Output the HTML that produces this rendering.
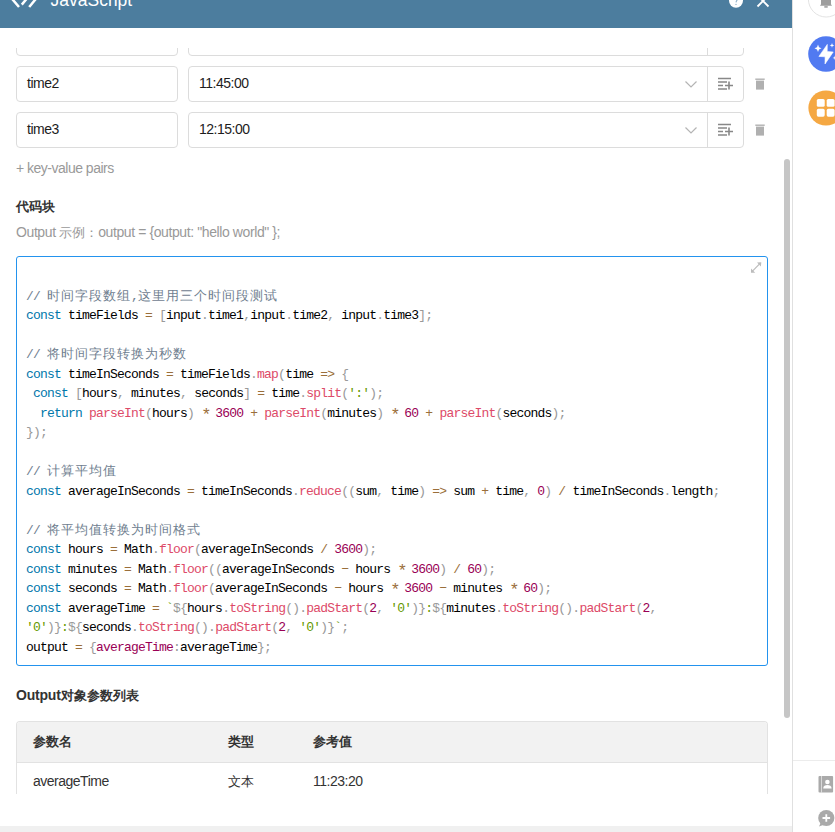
<!DOCTYPE html>
<html><head><meta charset="utf-8">
<style>
*{margin:0;padding:0;box-sizing:border-box}
html,body{width:835px;height:832px;overflow:hidden;background:#fff;font-family:"Liberation Sans",sans-serif;font-size:14px;letter-spacing:-0.5px;color:#333}
.abs{position:absolute}
.b{font-weight:bold;letter-spacing:-0.2px}
.cj{font-size:13px;letter-spacing:0}
#hdr{position:absolute;left:0;top:0;width:792px;height:28px;background:#4c7d9e}
#vline{position:absolute;left:792px;top:0;width:1px;height:832px;background:#e0e0e0}
#side{position:absolute;left:793px;top:0;width:42px;height:832px;background:#fff}
.inp{position:absolute;border:1px solid #dcdcdc;border-radius:4px;background:#fff;height:36px}
.inp span{position:absolute;left:10px;top:8px;color:#1c1c1c;font-size:14px}
.btnbox{position:absolute;border:1px solid #dcdcdc;border-left:1px solid #dcdcdc;border-radius:0 4px 4px 0;height:36px}
#code{position:absolute;left:16px;top:256px;width:752px;height:410px;border:1px solid #2393ee;border-radius:3px}
pre{position:absolute;left:9px;top:10px;font-family:"Liberation Mono",monospace;font-size:13px;letter-spacing:-0.8px;line-height:19.5px;color:#000}
pre .z{font-size:12.5px;letter-spacing:1px;line-height:0}
.as{font-size:17px;letter-spacing:-3.2px;position:relative;top:3px;line-height:0}
.k{color:#07a}.f{color:#dd4a68}.p{color:#999}.o{color:#9a6e3a}.n{color:#905}.s{color:#690}.c{color:#708090}
.tbl{position:absolute;left:16px;top:721px;width:752px;height:73px;border:1px solid #e2e2e2;border-bottom:none;border-radius:4px 4px 0 0;overflow:hidden}
.th{position:absolute;left:0;top:0;width:750px;height:41px;background:#f2f2f2;border-bottom:1px solid #e2e2e2}
</style></head><body>
<div id="scroll" style="position:absolute;left:0;top:48px;width:792px;height:746px;overflow:hidden"><div style="position:absolute;left:0;top:-48px;width:792px;height:832px">
<!-- row 0 (cut) -->
<div class="inp" style="left:16px;top:20px;width:162px"></div>
<div class="inp" style="left:188px;top:20px;width:556px"></div>
<div class="abs" style="left:707px;top:20px;width:1px;height:36px;background:#dcdcdc"></div>
<svg class="abs" style="left:685px;top:35px" width="12" height="7" viewBox="0 0 12 7"><path d="M0.5 0.5 L6 6 L11.5 0.5" stroke="#b4b4b4" stroke-width="1.2" fill="none"/></svg>
<svg class="abs" style="left:717px;top:31px" width="17" height="14" viewBox="0 0 17 14"><path d="M1 1.5H14 M1 5H10 M1 8.5H6 M1 12H10 M12 4.5V12.5 M8 8.5H16" stroke="#888" stroke-width="1.6" fill="none"/></svg>
<svg class="abs" style="left:755px;top:32px" width="10" height="12" viewBox="0 0 10 12"><path d="M0.3 1.2H9.7" stroke="#b0b0b0" stroke-width="1.4"/><rect x="1" y="2.6" width="8" height="9" fill="#b0b0b0"/></svg>

<!-- row 1 -->
<div class="inp" style="left:16px;top:66px;width:162px"><span>time2</span></div>
<div class="inp" style="left:188px;top:66px;width:556px"><span>11:45:00</span></div>
<div class="abs" style="left:707px;top:66px;width:1px;height:36px;background:#dcdcdc"></div>
<svg class="abs" style="left:685px;top:81px" width="12" height="7" viewBox="0 0 12 7"><path d="M0.5 0.5 L6 6 L11.5 0.5" stroke="#b4b4b4" stroke-width="1.2" fill="none"/></svg>
<svg class="abs" style="left:717px;top:77px" width="17" height="14" viewBox="0 0 17 14"><path d="M1 1.5H14 M1 5H10 M1 8.5H6 M1 12H10 M12 4.5V12.5 M8 8.5H16" stroke="#888" stroke-width="1.6" fill="none"/></svg>
<svg class="abs" style="left:755px;top:78px" width="10" height="12" viewBox="0 0 10 12"><path d="M0.3 1.2H9.7" stroke="#b0b0b0" stroke-width="1.4"/><rect x="1" y="2.6" width="8" height="9" fill="#b0b0b0"/></svg>
<!-- row 2 -->
<div class="inp" style="left:16px;top:112px;width:162px"><span>time3</span></div>
<div class="inp" style="left:188px;top:112px;width:556px"><span>12:15:00</span></div>
<div class="abs" style="left:707px;top:112px;width:1px;height:36px;background:#dcdcdc"></div>
<svg class="abs" style="left:685px;top:127px" width="12" height="7" viewBox="0 0 12 7"><path d="M0.5 0.5 L6 6 L11.5 0.5" stroke="#b4b4b4" stroke-width="1.2" fill="none"/></svg>
<svg class="abs" style="left:717px;top:123px" width="17" height="14" viewBox="0 0 17 14"><path d="M1 1.5H14 M1 5H10 M1 8.5H6 M1 12H10 M12 4.5V12.5 M8 8.5H16" stroke="#888" stroke-width="1.6" fill="none"/></svg>
<svg class="abs" style="left:755px;top:124px" width="10" height="12" viewBox="0 0 10 12"><path d="M0.3 1.2H9.7" stroke="#b0b0b0" stroke-width="1.4"/><rect x="1" y="2.6" width="8" height="9" fill="#b0b0b0"/></svg>

<div class="abs" style="left:16px;top:160px;color:#999">+ key-value pairs</div>
<div class="abs b cj" style="left:16px;top:198px;color:#333">代码块</div>
<div class="abs" style="left:16px;top:224px;color:#999;letter-spacing:-0.4px">Output <span class="cj">示例：</span>output = {output: "hello world" };</div>

<div id="code">
<pre>

<span class="c">// <span class="z">时间字段数组</span>,<span class="z">这里用三个时间段测试</span></span>
<span class="k">const</span> timeFields <span class="o">=</span> <span class="p">[</span>input<span class="p">.</span>time1<span class="p">,</span>input<span class="p">.</span>time2<span class="p">,</span> input<span class="p">.</span>time3<span class="p">];</span>

<span class="c">// <span class="z">将时间字段转换为秒数</span></span>
<span class="k">const</span> timeInSeconds <span class="o">=</span> timeFields<span class="p">.</span><span class="f">map</span><span class="p">(</span>time <span class="o">=&gt;</span> <span class="p">{</span>
 <span class="k">const</span> <span class="p">[</span>hours<span class="p">,</span> minutes<span class="p">,</span> seconds<span class="p">]</span> <span class="o">=</span> time<span class="p">.</span><span class="f">split</span><span class="p">(</span><span class="s">':'</span><span class="p">);</span>
  <span class="k">return</span> <span class="f">parseInt</span><span class="p">(</span>hours<span class="p">)</span> <span class="o as">*</span> <span class="n">3600</span> <span class="o">+</span> <span class="f">parseInt</span><span class="p">(</span>minutes<span class="p">)</span> <span class="o as">*</span> <span class="n">60</span> <span class="o">+</span> <span class="f">parseInt</span><span class="p">(</span>seconds<span class="p">);</span>
<span class="p">});</span>

<span class="c">// <span class="z">计算平均值</span></span>
<span class="k">const</span> averageInSeconds <span class="o">=</span> timeInSeconds<span class="p">.</span><span class="f">reduce</span><span class="p">((</span>sum<span class="p">,</span> time<span class="p">)</span> <span class="o">=&gt;</span> sum <span class="o">+</span> time<span class="p">,</span> <span class="n">0</span><span class="p">)</span> <span class="o">/</span> timeInSeconds<span class="p">.</span>length<span class="p">;</span>

<span class="c">// <span class="z">将平均值转换为时间格式</span></span>
<span class="k">const</span> hours <span class="o">=</span> Math<span class="p">.</span><span class="f">floor</span><span class="p">(</span>averageInSeconds <span class="o">/</span> <span class="n">3600</span><span class="p">);</span>
<span class="k">const</span> minutes <span class="o">=</span> Math<span class="p">.</span><span class="f">floor</span><span class="p">((</span>averageInSeconds <span class="o">&#8722;</span> hours <span class="o as">*</span> <span class="n">3600</span><span class="p">)</span> <span class="o">/</span> <span class="n">60</span><span class="p">);</span>
<span class="k">const</span> seconds <span class="o">=</span> Math<span class="p">.</span><span class="f">floor</span><span class="p">(</span>averageInSeconds <span class="o">&#8722;</span> hours <span class="o as">*</span> <span class="n">3600</span> <span class="o">&#8722;</span> minutes <span class="o as">*</span> <span class="n">60</span><span class="p">);</span>
<span class="k">const</span> averageTime <span class="o">=</span> <span class="s">`</span><span class="p">${</span>hours<span class="p">.</span><span class="f">toString</span><span class="p">().</span><span class="f">padStart</span><span class="p">(</span><span class="n">2</span><span class="p">,</span> <span class="s">'0'</span><span class="p">)}</span><span class="s">:</span><span class="p">${</span>minutes<span class="p">.</span><span class="f">toString</span><span class="p">().</span><span class="f">padStart</span><span class="p">(</span><span class="n">2</span><span class="p">,</span>
<span class="s">'0'</span><span class="p">)}</span><span class="s">:</span><span class="p">${</span>seconds<span class="p">.</span><span class="f">toString</span><span class="p">().</span><span class="f">padStart</span><span class="p">(</span><span class="n">2</span><span class="p">,</span> <span class="s">'0'</span><span class="p">)}</span><span class="s">`</span><span class="p">;</span>
output <span class="o">=</span> <span class="p">{</span><span class="n">averageTime</span><span class="p">:</span>averageTime<span class="p">};</span></pre>
<svg class="abs" style="left:733px;top:4px" width="13" height="13" viewBox="0 0 13 13"><path d="M7 1.6 L11.3 1.2 L10.9 5.4 Z M1 7.4 L1 11.7 L5.2 11.7 Z" fill="#bcbcbc"/><path d="M10.3 2.2 L2 10.6" stroke="#bcbcbc" stroke-width="1.2"/></svg>
</div>

<div class="abs b" style="left:16px;top:687px;color:#333">Output<span class="cj">对象参数列表</span></div>
<div class="tbl">
  <div class="th"></div>
  <div class="abs" style="left:16px;top:11px;color:#333"><span class="b cj">参数名</span></div>
  <div class="abs" style="left:211px;top:11px;color:#333"><span class="b cj">类型</span></div>
  <div class="abs" style="left:296px;top:11px;color:#333"><span class="b cj">参考值</span></div>
  <div class="abs" style="left:16px;top:51px;color:#333">averageTime</div>
  <div class="abs" style="left:211px;top:51px;color:#333"><span class="cj">文本</span></div>
  <div class="abs" style="left:296px;top:51px;color:#333">11:23:20</div>
</div>

</div></div>
<div id="hdr">
  <svg class="abs" style="left:0;top:-10px" width="40" height="20" viewBox="0 0 40 20"><path d="M19 2 L12.6 9.5 L19 17 M29.2 2 L35.4 9.5 L29.2 17 M21.8 14.6 L29 6" stroke="#fff" stroke-width="2.5" fill="none"/></svg>
  <div class="abs" style="left:50.5px;top:-10.5px;color:#fff;font-size:17.5px;letter-spacing:0">JavaScript</div>
  <svg class="abs" style="left:728px;top:-7px" width="16" height="16" viewBox="0 0 16 16"><circle cx="8" cy="7.8" r="7" fill="#fff"/><path d="M6.3 5.2 C6.5 3.6 9.7 3.6 9.7 5.4 C9.7 6.8 8.3 7.4 8 9.3" stroke="#8fb0c8" stroke-width="1.1" fill="none"/><circle cx="8" cy="11.4" r="0.7" fill="#8fb0c8"/></svg>
  <svg class="abs" style="left:756px;top:-6px" width="14" height="14" viewBox="0 0 14 14"><path d="M1.5 1.5 L12.5 12.5 M12.5 1.5 L1.5 12.5" stroke="#fff" stroke-width="1.8" fill="none"/></svg>
</div>

<div class="abs" style="left:784px;top:159px;width:6px;height:559px;border-radius:3px;background:#c6c6c6"></div>
<div class="abs" style="left:0;top:826px;width:792px;height:6px;background:#f0f0f0"></div>

<div id="vline"></div>
<div id="side">
  <svg class="abs" style="left:-3px;top:-25px" width="45" height="45" viewBox="0 0 45 45"><circle cx="36.2" cy="24.2" r="17.8" fill="#fff" stroke="#e3e3e3" stroke-width="1"/><path d="M31 20 L31 29.2 L30 30.8 H42 L41 29.2 L41 20 Z" fill="#9e9e9e"/><rect x="34.3" y="30.8" width="3.4" height="2" fill="#aaa"/></svg>
  <svg class="abs" style="left:0px;top:30px" width="42" height="48" viewBox="0 0 42 48"><circle cx="33" cy="24" r="17.8" fill="#517af1"/><path d="M34.3 14.4 L34.2 21.6 L40.2 22 L32 34 L32.1 26.8 L25.9 26.4 Z" fill="#fff" stroke="#fff" stroke-width="0.6" stroke-linejoin="round"/><path d="M25 14.5 L26 17.2 L28.5 18.3 L26 19.4 L25 22 L24 19.4 L21.5 18.3 L24 17.2 Z" fill="#fff"/><path d="M39 13 L39.6 14.8 L41.4 15.4 L39.6 16 L39 17.8 L38.4 16 L36.6 15.4 L38.4 14.8 Z" fill="#fff"/><path d="M42 25.5 L42.6 27.3 L44.4 27.9 L42.6 28.5 L42 30.3 L41.4 28.5 L39.6 27.9 L41.4 27.3 Z" fill="#fff"/></svg>
  <svg class="abs" style="left:0px;top:84px" width="42" height="48" viewBox="0 0 42 48"><circle cx="33" cy="24" r="17.6" fill="#f5a843"/><rect x="23.8" y="14.9" width="7.9" height="7.9" rx="1.6" fill="#fff"/><rect x="33.7" y="14.9" width="7.9" height="7.9" rx="1.6" fill="#fff"/><rect x="23.8" y="24.8" width="7.9" height="7.9" rx="1.6" fill="#fff"/><rect x="33.7" y="24.8" width="7.9" height="7.9" rx="1.6" fill="#fff"/></svg>
  <div class="abs" style="left:0;top:760px;width:42px;height:1px;background:#ececec"></div>
  <svg class="abs" style="left:24px;top:775px" width="18" height="19" viewBox="0 0 18 19"><rect x="1.5" y="1" width="14.6" height="16.5" rx="1" fill="#aaa"/><rect x="4.3" y="1" width="0.7" height="16.5" fill="#fff" opacity="0.8"/><circle cx="10.4" cy="7" r="2.3" fill="#fff"/><path d="M6.2 13.6 C6.2 10.8 8.3 10 10.4 10 C12.5 10 14.6 10.8 14.6 13.6 Z" fill="#fff"/></svg>
  <svg class="abs" style="left:24px;top:809px" width="18" height="19" viewBox="0 0 18 19"><circle cx="9.3" cy="9" r="8.1" fill="#aaa"/><path d="M2 17.5 L4.5 12 L7.5 15.5 Z" fill="#aaa"/><path d="M9.3 5.2V12.8 M5.5 9H13.1" stroke="#fff" stroke-width="1.8"/></svg>
</div>
</body></html>
